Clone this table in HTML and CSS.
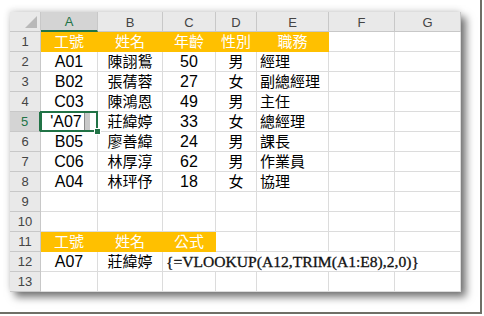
FILE: index.html
```html
<!DOCTYPE html>
<html>
<head>
<meta charset="utf-8">
<link rel="stylesheet" href="styles.css">
</head>
<body>
<div class="frame">
  <div class="sheet">
    <div class="hd corner"><span class="tri"></span></div>
    <div class="hd ch sel-col">A</div>
    <div class="hd ch">B</div>
    <div class="hd ch">C</div>
    <div class="hd ch">D</div>
    <div class="hd ch">E</div>
    <div class="hd ch">F</div>
    <div class="hd ch">G</div>

    <div class="hd rh">1</div>
    <div class="c y zh">工號</div><div class="c y zh">姓名</div><div class="c y zh">年齡</div><div class="c y zh">性別</div><div class="c y zh">職務</div><div class="c"></div><div class="c"></div>

    <div class="hd rh">2</div>
    <div class="c">A01</div><div class="c z">陳詡鴛</div><div class="c">50</div><div class="c z">男</div><div class="c z l">經理</div><div class="c"></div><div class="c"></div>

    <div class="hd rh">3</div>
    <div class="c">B02</div><div class="c z">張蒨蓉</div><div class="c">27</div><div class="c z">女</div><div class="c z l">副總經理</div><div class="c"></div><div class="c"></div>

    <div class="hd rh">4</div>
    <div class="c">C03</div><div class="c z">陳鴻恩</div><div class="c">49</div><div class="c z">男</div><div class="c z l">主任</div><div class="c"></div><div class="c"></div>

    <div class="hd rh sel-row">5</div>
    <div class="c active"><span>'A07</span><span class="caret"></span></div><div class="c z">莊緯婷</div><div class="c">33</div><div class="c z">女</div><div class="c z l">總經理</div><div class="c"></div><div class="c"></div>

    <div class="hd rh">6</div>
    <div class="c">B05</div><div class="c z">廖善緯</div><div class="c">24</div><div class="c z">男</div><div class="c z l">課長</div><div class="c"></div><div class="c"></div>

    <div class="hd rh">7</div>
    <div class="c">C06</div><div class="c z">林厚淳</div><div class="c">62</div><div class="c z">男</div><div class="c z l">作業員</div><div class="c"></div><div class="c"></div>

    <div class="hd rh">8</div>
    <div class="c">A04</div><div class="c z">林玶伃</div><div class="c">18</div><div class="c z">女</div><div class="c z l">協理</div><div class="c"></div><div class="c"></div>

    <div class="hd rh">9</div>
    <div class="c"></div><div class="c"></div><div class="c"></div><div class="c"></div><div class="c"></div><div class="c"></div><div class="c"></div>

    <div class="hd rh">10</div>
    <div class="c"></div><div class="c"></div><div class="c"></div><div class="c"></div><div class="c"></div><div class="c"></div><div class="c"></div>

    <div class="hd rh">11</div>
    <div class="c y zh">工號</div><div class="c y zh">姓名</div><div class="c y zh">公式</div><div class="c"></div><div class="c"></div><div class="c"></div><div class="c"></div>

    <div class="hd rh">12</div>
    <div class="c">A07</div><div class="c z">莊緯婷</div><div class="c formula">{=VLOOKUP(A12,TRIM(A1:E8),2,0)}</div>

    <div class="hd rh">13</div>
    <div class="c"></div><div class="c"></div><div class="c"></div><div class="c"></div><div class="c"></div><div class="c"></div><div class="c"></div>
  </div>
</div>
</body>
</html>
```

FILE: styles.css
```css
html, body {
  margin: 0;
  padding: 0;
  background: #ffffff;
}

.frame {
  box-sizing: border-box;
  width: 482px;
  height: 314px;
  padding: 12px 0 0 10px;
  border-right: 2px solid #6f6f66;
  border-bottom: 2px solid #6f6f66;
}

.sheet {
  display: grid;
  grid-template-columns: 31px 57px 65px 53px 41px 72px 66px 66px;
  grid-auto-rows: 20px;
  width: 451px;
  background: #ffffff;
  box-shadow: 5px 5px 8px rgba(0, 0, 0, 0.55), -1px -2px 6px rgba(0, 0, 0, 0.12);
  font-family: "Liberation Sans", "Noto Sans CJK TC", sans-serif;
  color: #000;
}

.hd {
  box-sizing: border-box;
  background: #e9e9e9;
  border-right: 1px solid #c8c8c8;
  border-bottom: 1px solid #c8c8c8;
  color: #444;
  font-size: 13px;
  display: flex;
  align-items: center;
  justify-content: center;
}

.corner {
  position: relative;
}

.tri {
  position: absolute;
  right: 3px;
  bottom: 3px;
  width: 0;
  height: 0;
  border-left: 12px solid transparent;
  border-bottom: 12px solid #b9b9b9;
}

.ch {
  padding-top: 1px;
}

.sel-col {
  background: #d4d4d4;
  color: #217346;
  border-bottom: 2px solid #217346;
}

.sel-row {
  background: #d4d4d4;
  color: #217346;
  border-right: 2px solid #217346;
}

.c {
  box-sizing: border-box;
  border-right: 1px solid #dcdcdc;
  border-bottom: 1px solid #dcdcdc;
  font-size: 16px;
  line-height: 19px;
  display: flex;
  align-items: center;
  justify-content: center;
  white-space: nowrap;
}

.z {
  font-size: 15px;
}

.l {
  justify-content: flex-start;
  padding-left: 3px;
}

.y {
  background: #ffc000;
  border-right-color: #ffc000;
  border-bottom-color: #ffc000;
  color: #ffffff;
}

.zh {
  font-size: 15px;
}

.active {
  position: relative;
  gap: 2px;
  padding-left: 2px;
}

.active::after {
  content: "";
  position: absolute;
  left: -1px;
  top: -1px;
  right: -1px;
  bottom: -1px;
  border: 2px solid #217346;
}

.active::before {
  content: "";
  position: absolute;
  right: -4px;
  bottom: -4px;
  width: 5px;
  height: 5px;
  background: #217346;
  border: 1px solid #ffffff;
  z-index: 2;
}

.caret {
  display: inline-block;
  width: 5px;
  height: 18px;
  background: #c9c9c9;
  border-left: 1px solid #8c8c8c;
}

.formula {
  grid-column: span 5;
  justify-content: flex-start;
  padding-left: 3px;
  font-family: "Liberation Serif", serif;
  font-size: 15.6px;
  color: #111;
  -webkit-text-stroke: 0.3px #111;
}
```
